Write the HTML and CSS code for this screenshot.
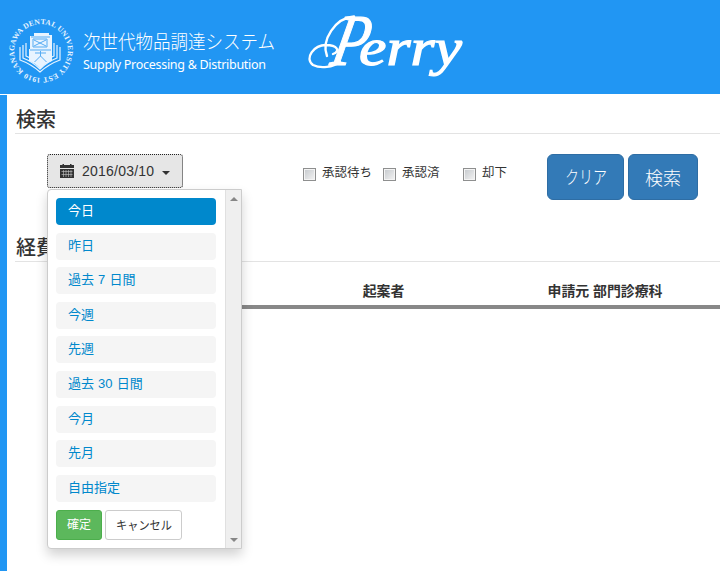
FILE: index.html
```html
<!DOCTYPE html>
<html lang="ja">
<head>
<meta charset="utf-8">
<title>Perry</title>
<link rel="stylesheet" href="styles.css">
</head>
<body>
<header class="header">
  <svg class="seal" width="70" height="70" viewBox="0 0 70 70">
    <defs><path id="ring" d="M18.300 56A26.800 26.800 0 0 1 51.700 14A26.800 26.800 0 0 1 18.300 56"/></defs>
    <text class="seal-text"><textPath href="#ring" startOffset="1" textLength="165">KANAGAWA DENTAL UNIVERSITY EST 1910</textPath></text>
    <g fill="none" stroke="#e8f4ff" stroke-width="1.2">
      <path d="M14 31v13q11 4 20 12q9-8 20-12V31M17 29v13q10 4 17 11q7-7 17-11V29M20 27v13q9 4 14 9q5-5 14-9V27"/>
    </g>
    <path d="M24 20h4v-3h15v2h3v15H24z" fill="#e8f4ff"/>
    <path d="M23 33h23v12q-7 2-11.500 8q-5-6-11.500-8z" fill="#e8f4ff"/>
    <path d="M28 24l12 6M40 24l-12 6M27 23h14v8H27zM25 21h19M24 34h21M29 37h11M34.500 35v5l-6 6M34.500 40l6 6" fill="none" stroke="#55abf3" stroke-width="1"/>
  </svg>
  <div class="brand">
    <svg width="224" height="58" viewBox="0 0 224 58">
      <text class="brand-ja" x="0" y="24" textLength="192" lengthAdjust="spacingAndGlyphs">次世代物品調達システム</text>
      <text class="brand-en" x="0" y="44" textLength="183">Supply Processing &amp; Distribution</text>
    </svg>
  </div>
  <svg class="wordmark" width="176" height="84" viewBox="0 0 176 84">
    <path d="M33 53C26 58 14 60 6 56C-3 49 7 36 19 36C30 36 34 42 26 45M20 47C14 31 28 9 47 7.500" fill="none" stroke="#fff" stroke-width="2.400" stroke-linecap="round"/>
    <g transform="translate(9 0) skewX(-12)">
      <text class="word-p" x="25" y="56" textLength="36" lengthAdjust="spacingAndGlyphs">P</text>
    </g>
    <text class="word-rest" x="52" y="56" textLength="103" lengthAdjust="spacingAndGlyphs">erry</text>
  </svg>
</header>
<main class="main">
  <h1 class="heading">検索</h1>
  <section class="filters">
    <div class="date">
      <button class="date-button">
        <svg width="14" height="14" viewBox="0 0 14 14">
          <path d="M0 1h2.500V0h1.500v1h6V0h1.500v1H14v3H0zM0 5h14v9H0z" fill="#333"/>
          <path d="M1.500 7.500h11M1.500 10.500h11M3.500 6v7M6 6v7M8.500 6v7M11 6v7" stroke="#c8c8c8" stroke-width=".6"/>
        </svg>
        <span class="date-value">2016/03/10</span>
        <i class="caret"></i>
      </button>
      <div class="menu">
        <div class="menu-body">
          <ul class="ranges">
            <li class="range active">今日</li>
            <li class="range">昨日</li>
            <li class="range">過去 7 日間</li>
            <li class="range">今週</li>
            <li class="range">先週</li>
            <li class="range">過去 30 日間</li>
            <li class="range">今月</li>
            <li class="range">先月</li>
            <li class="range">自由指定</li>
          </ul>
          <div class="actions">
            <button class="small ok">確定</button>
            <button class="small cancel"><svg width="60" height="18" viewBox="0 0 60 18"><text x="2" y="14" textLength="56" lengthAdjust="spacingAndGlyphs">キャンセル</text></svg></button>
          </div>
        </div>
        <div class="scroll"><i class="up"></i><i class="down"></i></div>
      </div>
    </div>
    <div class="checks">
      <label class="check"><i class="box"></i>承認待ち</label>
      <label class="check"><i class="box"></i>承認済</label>
      <label class="check"><i class="box"></i>却下</label>
    </div>
    <div class="buttons">
      <button class="primary clear"><svg width="46" height="28" viewBox="0 0 46 28"><text x="2" y="21" textLength="42" lengthAdjust="spacingAndGlyphs">クリア</text></svg></button>
      <button class="primary search">検索</button>
    </div>
  </section>
  <h2 class="heading">経費</h2>
  <div class="table-head">
    <span></span>
    <span>起案者</span>
    <span>申請元 部門診療科</span>
  </div>
</main>
</body>
</html>
```
FILE: styles.css
```css
* { box-sizing: border-box; }
body {
  margin: 0;
  width: 720px;
  height: 571px;
  overflow: hidden;
  background: #fff;
  color: #333;
  font: 13px/18px "Liberation Sans", "Noto Sans CJK JP", sans-serif;
}
button { font: inherit; margin: 0; padding: 0; }
svg { display: block; }
.header {
  display: flex;
  height: 94px;
  margin-bottom: 1px;
  padding-left: 6px;
  background: #2196f3;
}
.seal { margin-top: 16px; }
.seal-text { fill: #eaf5ff; font: bold 7.500px "Liberation Serif", serif; }
.brand { width: 224px; margin: 25px 0 0 7px; }
.brand-ja { fill: #fff; font: 300 19px "Noto Sans CJK JP", sans-serif; }
.brand-en { fill: #fff; font: 12.500px "Noto Sans", sans-serif; }
.wordmark { margin-top: 9px; }
.word-p { fill: #fff; stroke: #fff; stroke-width: 1.2px; font: italic 73px "Liberation Serif", serif; }
.word-rest { fill: #fff; stroke: #fff; stroke-width: 1.2px; font: italic 52px "Liberation Serif", serif; }
.main {
  height: 476px;
  border-left: 7px solid #2196f3;
  padding: 8px 0 0 8px;
}
.heading {
  height: 31px;
  margin: 0;
  border-bottom: 1px solid #e3e3e3;
  font: 500 20px/31px "Noto Sans CJK JP", sans-serif;
  text-indent: 1px;
}
.filters {
  display: flex;
  height: 97px;
  padding: 20px 0 0 32px;
}
.date { position: relative; width: 256px; }
.date-button {
  display: flex;
  align-items: center;
  width: 136px;
  height: 34px;
  padding: 0 11px 0 12px;
  border: 1px dotted #222;
  border-radius: 3px;
  background: #e6e6e6;
  color: #333;
  font-size: 14px;
  letter-spacing: .22px;
}
.date-value { margin: 0 8px 0 8px; }
.caret {
  margin-top: 3px;
  border: 4px solid transparent;
  border-top-color: #333;
  border-bottom: 0;
}
.menu {
  position: absolute;
  z-index: 1;
  top: 35px;
  left: 0;
  display: flex;
  width: 195px;
  height: 360px;
  border: 1px solid #ccc;
  border-radius: 4px 0 0 4px;
  background: #fff;
  box-shadow: 0 6px 12px rgba(0, 0, 0, .18);
}
.menu-body { width: 177px; padding: 8px; }
.ranges { margin: 0; padding: 0; list-style: none; }
.range {
  width: 160px;
  height: 27px;
  margin-bottom: 7.620px;
  padding-left: 12px;
  border-radius: 4px;
  background: #f5f5f5;
  color: #08c;
  font: 13px/26.500px "Liberation Sans", "Noto Sans CJK JP", sans-serif;
  word-spacing: .5px;
}
.active { background: #08c; color: #fff; }
.actions { display: flex; gap: 3px; padding-top: .4px; }
.small { height: 30px; border-radius: 3px; font-size: 12px; }
.small text { font: 12px "Noto Sans CJK JP", sans-serif; fill: #333; }
.ok { width: 46px; border: 1px solid #4cae4c; background: #5cb85c; color: #fff; }
.cancel {
  display: flex;
  align-items: center;
  justify-content: center;
  width: 77px;
  border: 1px solid #ccc;
  background: #fff;
}
.scroll {
  display: flex;
  flex-direction: column;
  justify-content: space-between;
  align-items: center;
  width: 16px;
  padding: 7px 0 6px;
  border-left: 1px solid #e0e0e0;
  background: #efefef;
}
.up, .down { border: 4px solid transparent; }
.up { border-top: 0; border-bottom-color: #868686; }
.down { border-bottom: 0; border-top-color: #868686; }
.checks { display: flex; width: 244px; padding-top: 10px; }
.check { display: flex; width: 80px; white-space: nowrap; font-size: 12.500px; }
.box {
  width: 13px;
  height: 13px;
  margin: 4px 6px 0 0;
  border: 1px solid #8e8f8f;
  background: linear-gradient(135deg, #c4c8cc, #f4f4f4);
  box-shadow: inset 0 0 0 1px #f4f4f4;
}
.buttons { display: flex; gap: 4px; }
.primary {
  display: flex;
  align-items: center;
  justify-content: center;
  height: 46px;
  border: 1px solid #2e6da4;
  border-radius: 6px;
  background: #337ab7;
  color: #fff;
  font: 300 18px "Noto Sans CJK JP", sans-serif;
}
.primary text { fill: #fff; font: 300 18px "Noto Sans CJK JP", sans-serif; }
.clear { width: 77px; }
.search { width: 70px; }
.table-head {
  display: grid;
  grid-template-columns: 224px 223px 1fr;
  height: 47px;
  margin-left: 33px;
  padding-top: 20px;
  border-bottom: 4px solid #888;
  font-size: 13.900px;
  font-weight: bold;
  text-align: center;
}
.table-head span:last-child { padding-right: 5px; }
```
